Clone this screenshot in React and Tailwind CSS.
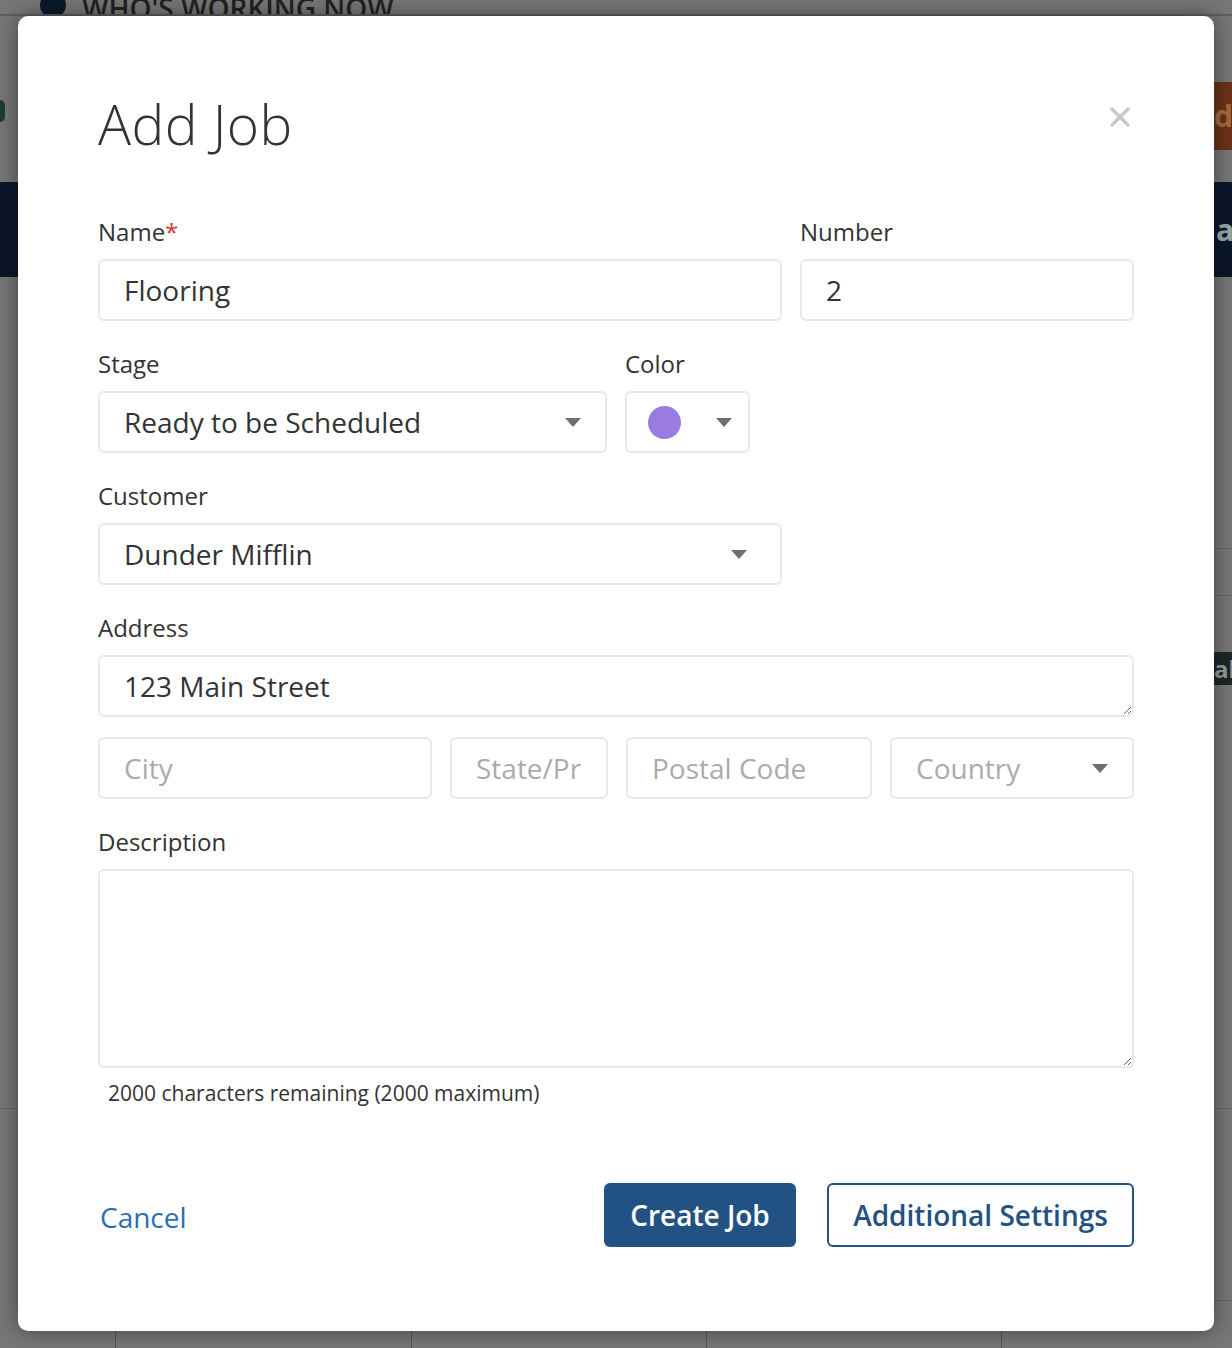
import { useState } from 'react'

const font = { fontFamily: '"Open Sans", "Liberation Sans", sans-serif' }

function Caret({ className = '' }) {
  return (
    <svg width="16" height="9" viewBox="0 0 16 9" className={className}>
      <path d="M0 0 L16 0 L8 9 Z" fill="#6f6f6f" />
    </svg>
  )
}

function Label({ children, required }) {
  return (
    <div className="h-8 leading-8 mb-[11px] text-[24px] text-[#333]">
      {children}
      {required && <span className="text-[#d0342c]">*</span>}
    </div>
  )
}

const field =
  'h-[62px] w-full rounded-[6px] border-2 border-[#e8e8e8] bg-white px-6 text-[28px] text-[#333] outline-none placeholder:text-[#ababab]'

function SelectBox({ value, placeholder, className = '', caretClass = 'mr-[26px]' }) {
  return (
    <div className={`${field} flex items-center justify-between pr-0 ${className}`}>
      <span className={value ? 'text-[#333]' : 'text-[#ababab]'}>{value || placeholder}</span>
      <Caret className={caretClass} />
    </div>
  )
}

function Background() {
  return (
    <div className="absolute inset-0 bg-[#777]">
      {/* header strip */}
      <div className="h-[16px] border-b-2 border-[#5e5e5e] overflow-hidden relative">
        <div className="absolute left-[40px] -top-[8px] w-[26px] h-[26px] rounded-full bg-[#0b1a2c]" />
        <div className="absolute left-[82px] -top-[13px] text-[28px] font-semibold text-[#222] whitespace-nowrap">
          WHO'S WORKING NOW
        </div>
      </div>
      {/* left side */}
      <div className="absolute left-0 top-[100px] w-[5px] h-[22px] rounded-r-full bg-[#1f3a3a]" />
      <div className="absolute left-0 top-[182px] w-full h-[95px] bg-[#0b1729]" />
      <div className="absolute left-0 top-[1108px] w-full h-px bg-[#686868]" />
      {/* right side */}
      <div className="absolute right-0 top-[82px] w-[18px] h-[68px] overflow-hidden bg-[#6b3318] text-[#a66a3f] text-[30px] font-bold leading-[68px]">d</div>
      <div className="absolute right-0 top-[210px] w-[18px] overflow-hidden text-[#9aa] text-[30px] font-bold leading-[40px] pl-[2px]">a</div>
      <div className="absolute right-0 top-[548px] w-[18px] h-px bg-[#666]" />
      <div className="absolute right-0 top-[595px] w-[18px] h-px bg-[#666]" />
      <div className="absolute right-0 top-[652px] w-[18px] h-[33px] overflow-hidden bg-[#1d2828] text-[#999] text-[24px] font-bold leading-[33px]">al</div>
      <div className="absolute right-0 top-[1108px] w-[18px] h-px bg-[#666]" />
      <div className="absolute right-0 top-[1300px] w-[18px] h-px bg-[#666]" />
      {/* bottom grid */}
      <div className="absolute left-0 bottom-0 w-full h-[17px] flex">
        <div className="w-[116px] border-r border-[#555]" />
        <div className="w-[296px] border-r border-[#555]" />
        <div className="w-[295px] border-r border-[#555]" />
        <div className="w-[295px] border-r border-[#555]" />
      </div>
    </div>
  )
}

export default function App() {
  const [desc, setDesc] = useState('')

  return (
    <div className="relative w-[1232px] h-[1348px] overflow-hidden" style={font}>
      <Background />

      <div className="absolute left-[18px] top-[16px] w-[1196px] h-[1315px] rounded-[10px] bg-white shadow-[0_0_22px_rgba(0,0,0,0.45)] px-20">
        <div className="flex items-start justify-between pt-[72px] mb-[56px]">
          <h1 className="h-[72px] leading-[72px] text-[55px] font-light text-[#333] tracking-[0.5px]">Add Job</h1>
          <button className="mt-[17px] mr-[2px] w-[24px] h-[24px] flex items-center justify-center">
            <svg width="22" height="22" viewBox="0 0 22 22">
              <path d="M3 3 L19 19 M19 3 L3 19" stroke="#c9c9c9" strokeWidth="3.5" strokeLinecap="round" />
            </svg>
          </button>
        </div>

        {/* name / number */}
        <div className="flex gap-[18px] mb-[27px]">
          <div className="w-[684px]">
            <Label required>Name</Label>
            <input className={field} defaultValue="Flooring" style={font} />
          </div>
          <div className="flex-1">
            <Label>Number</Label>
            <input className={field} defaultValue="2" style={font} />
          </div>
        </div>

        {/* stage / color */}
        <div className="flex gap-[18px] mb-[27px]">
          <div className="w-[509px]">
            <Label>Stage</Label>
            <SelectBox value="Ready to be Scheduled" caretClass="mr-[24px]" />
          </div>
          <div className="w-[125px]">
            <Label>Color</Label>
            <div className={`${field} flex items-center justify-between !px-0`}>
              <span className="ml-[21px] w-[33px] h-[33px] rounded-full bg-[#9b7be0]" />
              <Caret className="mr-[16px]" />
            </div>
          </div>
        </div>

        {/* customer */}
        <div className="w-[684px] mb-[27px]">
          <Label>Customer</Label>
          <SelectBox value="Dunder Mifflin" caretClass="mr-[33px]" />
        </div>

        {/* address */}
        <div className="mb-[20px]">
          <Label>Address</Label>
          <textarea
            className={`${field} block resize-y py-[11px] leading-[36px]`}
            defaultValue="123 Main Street"
            rows={1}
            style={font}
          />
        </div>

        <div className="flex gap-[18px] mb-[27px]">
          <input className={`${field} !w-[334px]`} placeholder="City" style={font} />
          <input className={`${field} !w-[158px]`} placeholder="State/Province" style={font} />
          <input className={`${field} !w-[246px]`} placeholder="Postal Code" style={font} />
          <SelectBox placeholder="Country" className="flex-1 !w-auto" caretClass="mr-[24px]" />
        </div>

        {/* description */}
        <div>
          <Label>Description</Label>
          <textarea
            className={`${field} block !h-[199px] resize-y py-3`}
            value={desc}
            onChange={(e) => setDesc(e.target.value)}
            style={font}
          />
          <div className="mt-[10px] pl-[10px] text-[21px] leading-[30px] text-[#333]">
            {2000 - desc.length} characters remaining (2000 maximum)
          </div>
        </div>

        {/* footer */}
        <div className="flex items-center justify-between mt-[75px]">
          <a href="#" className="ml-[2px] mt-[4px] text-[28px] text-[#2c6db3]">Cancel</a>
          <div className="flex gap-[31px]">
            <button className="h-[64px] w-[192px] rounded-[6px] bg-[#215283] text-white text-[28px] font-semibold">
              Create Job
            </button>
            <button className="h-[64px] w-[307px] rounded-[6px] border-2 border-[#215283] text-[#215283] text-[28px] font-semibold">
              Additional Settings
            </button>
          </div>
        </div>
      </div>
    </div>
  )
}
